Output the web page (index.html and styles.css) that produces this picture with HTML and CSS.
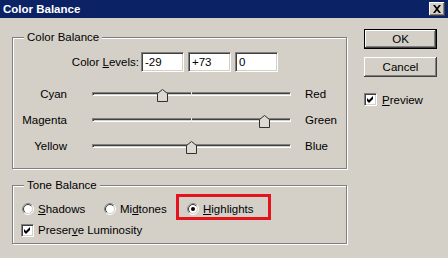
FILE: index.html
```html
<!DOCTYPE html>
<html lang="en">
<head>
	<meta charset="UTF-8">
	<title>Color Balance</title>
	<link rel="stylesheet" href="styles.css">
</head>
<body>
	<div class="window">
		<div class="titlebar">
			<span class="title">Color Balance</span>
			<span class="close-btn">
				<svg width="16" height="14" viewBox="0 0 16 14"><path d="M4 3 L6 3 L8 5.5 L10 3 L12 3 L9 7 L12 11 L10 11 L8 8.5 L6 11 L4 11 L7 7 Z" fill="#000"/></svg>
			</span>
		</div>
		<div class="dialog">
			<div class="main">
				<div class="group balance">
					<span class="group-title">Color Balance</span>
					<div class="levels">
						<label class="levels-label">Color <u>L</u>evels:</label>
						<input class="field" type="text" value="-29">
						<input class="field" type="text" value="+73">
						<input class="field" type="text" value="0">
					</div>
					<div class="slider-row">
						<span class="name">Cyan</span>
						<div class="track"><span class="thumb" style="left: 64px"><svg width="11" height="13" viewBox="0 0 11 13"><path d="M0.5 12.5 L0.5 4.5 L5.5 0.5 L10.5 4.5 L10.5 12.5 Z" fill="#dcd9d2" stroke="#303030"/></svg></span></div>
						<span class="end">Red</span>
					</div>
					<div class="slider-row">
						<span class="name">Magenta</span>
						<div class="track"><span class="thumb" style="left: 166px"><svg width="11" height="13" viewBox="0 0 11 13"><path d="M0.5 12.5 L0.5 4.5 L5.5 0.5 L10.5 4.5 L10.5 12.5 Z" fill="#dcd9d2" stroke="#303030"/></svg></span></div>
						<span class="end">Green</span>
					</div>
					<div class="slider-row">
						<span class="name">Yellow</span>
						<div class="track"><span class="thumb" style="left: 93px"><svg width="11" height="13" viewBox="0 0 11 13"><path d="M0.5 12.5 L0.5 4.5 L5.5 0.5 L10.5 4.5 L10.5 12.5 Z" fill="#dcd9d2" stroke="#303030"/></svg></span></div>
						<span class="end">Blue</span>
					</div>
				</div>
				<div class="group tone">
					<span class="group-title">Tone Balance</span>
					<div class="options">
						<span class="option shadows">
							<svg class="radio" width="12" height="12" viewBox="0 0 12 12"><circle cx="6" cy="6" r="5.5" fill="none" stroke="#fff"/><path d="M2.1 9.9 A5.5 5.5 0 0 1 9.9 2.1" fill="none" stroke="#808080"/><circle cx="6" cy="6" r="4.5" fill="#fff" stroke="#d4d0c8"/><path d="M2.8 9.2 A4.5 4.5 0 0 1 9.2 2.8" fill="none" stroke="#404040"/></svg>
							<span><u>S</u>hadows</span>
						</span>
						<span class="option midtones">
							<svg class="radio" width="12" height="12" viewBox="0 0 12 12"><circle cx="6" cy="6" r="5.5" fill="none" stroke="#fff"/><path d="M2.1 9.9 A5.5 5.5 0 0 1 9.9 2.1" fill="none" stroke="#808080"/><circle cx="6" cy="6" r="4.5" fill="#fff" stroke="#d4d0c8"/><path d="M2.8 9.2 A4.5 4.5 0 0 1 9.2 2.8" fill="none" stroke="#404040"/></svg>
							<span>Mi<u>d</u>tones</span>
						</span>
						<span class="option highlights marked">
							<svg class="radio" width="12" height="12" viewBox="0 0 12 12"><circle cx="6" cy="6" r="5.5" fill="none" stroke="#fff"/><path d="M2.1 9.9 A5.5 5.5 0 0 1 9.9 2.1" fill="none" stroke="#808080"/><circle cx="6" cy="6" r="4.5" fill="#fff" stroke="#d4d0c8"/><path d="M2.8 9.2 A4.5 4.5 0 0 1 9.2 2.8" fill="none" stroke="#404040"/><circle cx="6" cy="6" r="2" fill="#000"/></svg>
							<span><u>H</u>ighlights</span>
						</span>
					</div>
					<div class="preserve">
						<span class="check"><svg width="11" height="11" viewBox="0 0 11 11"><path d="M2 4 L4 6 L8 2 L8 5 L4 9 L2 7 Z" fill="#000"/></svg></span>
						<span>Preser<u>v</u>e Luminosity</span>
					</div>
				</div>
			</div>
			<div class="side">
				<button class="btn default">OK</button>
				<button class="btn cancel">Cancel</button>
				<div class="preview">
					<span class="check"><svg width="11" height="11" viewBox="0 0 11 11"><path d="M2 4 L4 6 L8 2 L8 5 L4 9 L2 7 Z" fill="#000"/></svg></span>
					<span><u>P</u>review</span>
				</div>
			</div>
		</div>
	</div>
</body>
</html>
```
FILE: styles.css
```css
body {
	margin: 0;
	background-color: #d4d0c8;
	font-family: "Liberation Sans", Arial, sans-serif;
	font-size: 11.5px;
	color: #000;
}
.window {
	width: 448px;
	height: 258px;
	overflow: hidden;
}
.titlebar {
	height: 18px;
	padding: 0 3px;
	display: flex;
	align-items: center;
	justify-content: space-between;
	background-color: #0b2265;
}
.title {
	color: #fff;
	font-weight: bold;
}
.close-btn {
	display: flex;
	width: 16px;
	height: 14px;
	background-color: #d4d0c8;
	box-shadow: inset -1px -1px #404040, inset 1px 1px #fff, inset -2px -2px #808080;
}
.dialog {
	display: flex;
	padding: 11px 0 0 12px;
}
.main {
	width: 335px;
	margin-top: 8px;
}
.group {
	position: relative;
	box-sizing: border-box;
	border: 1px solid #808080;
	box-shadow: inset 1px 1px #fff, 1px 1px #fff;
}
.group-title {
	position: absolute;
	top: -8px;
	left: 11px;
	padding: 0 3px;
	line-height: 14px;
	background-color: #d4d0c8;
}
.balance {
	height: 132px;
	padding-top: 14px;
}
.levels {
	display: flex;
	align-items: center;
	height: 20px;
}
.levels-label {
	width: 126px;
	margin-right: 2px;
	text-align: right;
}
.field {
	width: 43px;
	height: 20px;
	margin: 0 4px 0 0;
	padding: 0 0 0 3px;
	box-sizing: border-box;
	border: 1px solid;
	border-color: #808080 #fff #fff #808080;
	box-shadow: inset 1px 1px #404040, inset -1px -1px #d4d0c8;
	background-color: #fff;
	font: inherit;
	outline: none;
}
.slider-row {
	display: flex;
	align-items: center;
	height: 26px;
}
.levels + .slider-row {
	margin-top: 9px;
}
.name {
	width: 54px;
	text-align: right;
}
.track {
	position: relative;
	width: 199px;
	height: 4px;
	margin-left: 25px;
	box-sizing: border-box;
	border: 1px solid;
	border-color: #808080 #fff #fff #808080;
	box-shadow: inset 1px 1px #404040, inset -1px -1px #d4d0c8;
	background-color: #fff;
}
.track::after {
	content: "";
	position: absolute;
	left: 98px;
	top: -1px;
	width: 1px;
	height: 4px;
	background-color: #ecebe6;
}
.thumb {
	position: absolute;
	top: -4px;
	display: flex;
	z-index: 1;
}
.end {
	margin-left: 14px;
}
.tone {
	height: 59px;
	margin-top: 16px;
	padding-top: 15px;
}
.options {
	display: flex;
	align-items: center;
	height: 16px;
	padding-left: 9px;
}
.option {
	display: flex;
	align-items: center;
	gap: 4px;
}
.shadows {
	width: 82px;
}
.midtones {
	width: 83px;
}
.highlights {
	width: 68px;
}
.marked {
	position: relative;
}
.marked::after {
	content: "";
	position: absolute;
	left: -11px;
	right: -16px;
	top: -9px;
	bottom: -5px;
	border: 3px solid #e3141b;
}
.preserve {
	display: flex;
	align-items: center;
	gap: 4px;
	height: 16px;
	margin-top: 5px;
	padding-left: 8px;
}
.check {
	display: flex;
	width: 13px;
	height: 13px;
	box-sizing: border-box;
	border: 1px solid;
	border-color: #808080 #fff #fff #808080;
	box-shadow: inset 1px 1px #404040, inset -1px -1px #d4d0c8;
	background-color: #fff;
}
.side {
	display: flex;
	flex-direction: column;
	width: 73px;
	margin-left: 17px;
}
.btn {
	height: 20px;
	padding: 0;
	border: none;
	background-color: #d4d0c8;
	box-shadow: inset -1px -1px #404040, inset 1px 1px #fff, inset -2px -2px #808080;
	font: inherit;
	color: #000;
}
.btn.default {
	border: 1px solid #000;
}
.cancel {
	margin-top: 8px;
}
.preview {
	display: flex;
	align-items: center;
	gap: 5px;
	height: 13px;
	margin-top: 16px;
}
```
